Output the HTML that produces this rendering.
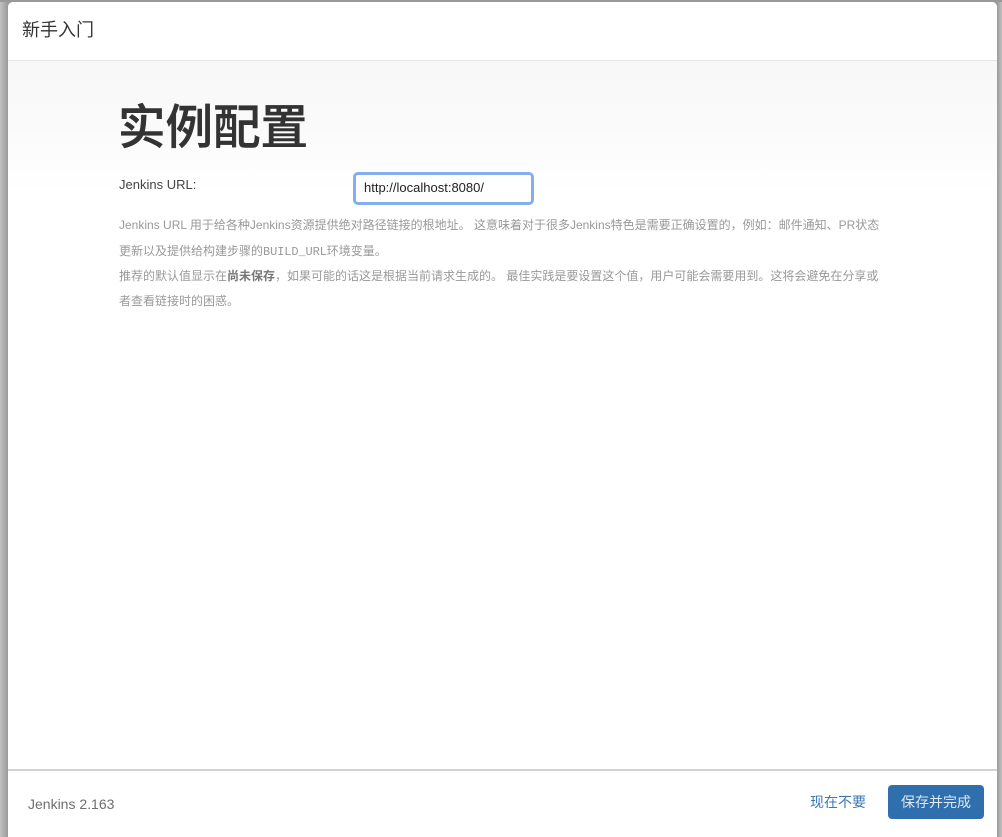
<!DOCTYPE html>
<html lang="zh">
<head>
<meta charset="utf-8">
<title>新手入门</title>
<style>
html,body{margin:0;padding:0;width:1002px;height:837px;overflow:hidden;background:#a8a8a8;}
body{position:relative;font-family:"Liberation Sans","Noto Sans CJK SC",sans-serif;}
.edge{position:absolute;left:0;top:0;width:1002px;height:837px;background:linear-gradient(90deg,#c2c2c2 0,#9a9a9a 8px,#9a9a9a 997px,#c2c2c2 1002px);}
.top{position:absolute;left:0;top:0;width:1002px;height:2px;background:#999;}
.panel{position:absolute;left:8px;top:2px;width:989px;height:835px;background:#fff;border-radius:5px 5px 0 0;overflow:hidden;}
.hdr{position:absolute;left:0;top:0;width:989px;height:58px;border-bottom:1px solid #e4e4e4;background:#fff;}
.grad{position:absolute;left:0;top:59px;width:989px;height:130px;background:linear-gradient(180deg,#f8f8f8 0,#fafafa 50%,#fff 100%);}
.abs{position:absolute;white-space:nowrap;}
.d{position:absolute;left:119px;white-space:nowrap;font-size:12px;line-height:20px;color:#999;}
.d b{color:#777;font-weight:700;}
.d code{font-family:"Liberation Mono",monospace;font-size:12px;letter-spacing:-.01em;}
.inp{position:absolute;left:353px;top:172px;width:181px;height:33px;box-sizing:border-box;border:3px solid #85aef0;border-radius:5px;background:#fff;font-size:13px;line-height:26px;padding-left:8px;color:#222;white-space:nowrap;}
.ftr{position:absolute;left:8px;top:769px;width:989px;height:68px;border-top:2px solid #d2d2d2;box-sizing:border-box;background:#fff;}
.btn{position:absolute;left:888px;top:785px;width:96px;height:34px;background:#2f6fae;border-radius:4px;color:#dde8f3;font-size:14px;line-height:34px;text-align:center;}
</style>
</head>
<body>
<div class="edge"></div>
<div class="top"></div>
<div class="panel">
  <div class="hdr"></div>
  <div class="grad"></div>
</div>
<div class="abs" style="left:22px;top:18px;font-size:18px;line-height:24px;color:#333;">新手入门</div>
<div class="abs" style="left:118px;top:100px;font-size:47.5px;line-height:58px;font-weight:500;color:#333;-webkit-text-stroke:.5px #333;">实例配置</div>
<div class="abs" style="left:119px;top:176px;font-size:13px;line-height:18px;color:#444;">Jenkins URL:</div>
<div class="inp">http://localhost:8080/</div>
<div class="d" style="top:215px;">Jenkins URL 用于给各种Jenkins资源提供绝对路径链接的根地址。 这意味着对于很多Jenkins特色是需要正确设置的，例如：邮件通知、PR状态</div>
<div class="d" style="top:241px;">更新以及提供给构建步骤的<code>BUILD_URL</code>环境变量。</div>
<div class="d" style="top:266px;">推荐的默认值显示在<b>尚未保存</b>，如果可能的话这是根据当前请求生成的。 最佳实践是要设置这个值，用户可能会需要用到。这将会避免在分享或</div>
<div class="d" style="top:291px;">者查看链接时的困惑。</div>
<div class="ftr"></div>
<div class="abs" style="left:28px;top:795px;font-size:14px;line-height:18px;color:#6e6e6e;">Jenkins 2.163</div>
<div class="abs" style="left:810px;top:792px;font-size:14px;line-height:20px;color:#3a78b5;">现在不要</div>
<div class="btn">保存并完成</div>
</body>
</html>
